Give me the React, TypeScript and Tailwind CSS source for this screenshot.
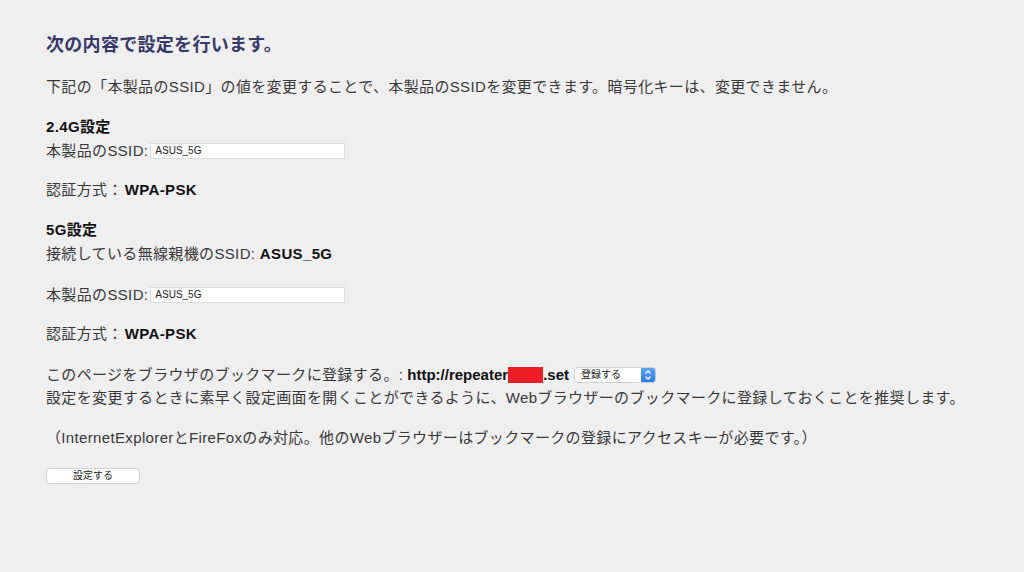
import React from "react";

const font = { fontFamily: '"Liberation Sans", "Noto Sans CJK JP", sans-serif' };

function SsidInput() {
  return (
    <span className="inline-block align-middle ml-[2px] w-[195px] h-[16px] bg-white border border-[#dcdcdc] text-[10px] leading-[14px] text-[#222] pl-[4px] tracking-normal">
      ASUS_5G
    </span>
  );
}

export default function App() {
  return (
    <div className="min-h-[572px] w-[1024px] bg-[#efefef] text-[#383838] text-[15px] leading-[24px] tracking-[0.35px] pl-[46px] pt-[33px]" style={font}>
      <h1 className="text-[18px] leading-[24px] font-bold text-[#38386a] tracking-[0.3px]">次の内容で設定を行います。</h1>
      <p className="mt-[18px]">下記の「本製品のSSID」の値を変更することで、本製品のSSIDを変更できます。暗号化キーは、変更できません。</p>

      <div className="mt-[16px] font-bold text-[#111]">2.4G設定</div>
      <div className="flex items-center">
        <span>本製品のSSID:</span>
        <SsidInput />
      </div>
      <div className="mt-[15px]">
        認証方式：<span className="font-bold text-[#111] ml-[2px]">WPA-PSK</span>
      </div>

      <div className="mt-[16px] font-bold text-[#111]">5G設定</div>
      <div>
        接続している無線親機のSSID: <span className="font-bold text-[#111]">ASUS_5G</span>
      </div>
      <div className="mt-[17px] flex items-center">
        <span>本製品のSSID:</span>
        <SsidInput />
      </div>
      <div className="mt-[15px]">
        認証方式：<span className="font-bold text-[#111] ml-[2px]">WPA-PSK</span>
      </div>

      <div className="mt-[17px] flex items-center">
        <span>このページをブラウザのブックマークに登録する。:</span>
        <span className="font-bold text-[#111] ml-[4px] tracking-normal">http://repeater</span>
        <span className="inline-block w-[35px] h-[16px] bg-[#ee1c25]"></span>
        <span className="font-bold text-[#111] tracking-normal">.set</span>
        <span className="ml-[5px] inline-flex items-center w-[82px] h-[16px] bg-white rounded-[3px] border border-[#d0d0d0] text-[10px] leading-[14px] text-[#222] overflow-hidden tracking-normal">
          <span className="flex-1 pl-[6px]">登録する</span>
          <span className="w-[14px] h-full bg-gradient-to-b from-[#5aa6f5] to-[#2a78e4] flex items-center justify-center">
            <svg width="8" height="12" viewBox="0 0 8 12">
              <path d="M1.5 4.5 L4 2 L6.5 4.5" stroke="white" strokeWidth="1.3" fill="none" />
              <path d="M1.5 7.5 L4 10 L6.5 7.5" stroke="white" strokeWidth="1.3" fill="none" />
            </svg>
          </span>
        </span>
      </div>
      <div className="-mt-[1px]">設定を変更するときに素早く設定画面を開くことができるように、Webブラウザーのブックマークに登録しておくことを推奨します。</div>

      <div className="mt-[16px]">（InternetExplorerとFireFoxのみ対応。他のWebブラウザーはブックマークの登録にアクセスキーが必要です。）</div>

      <button className="mt-[18px] block w-[94px] h-[16px] bg-white rounded-[3px] border border-[#cfcfcf] text-[10px] leading-[14px] text-[#222] tracking-normal" style={font}>
        設定する
      </button>
    </div>
  );
}
